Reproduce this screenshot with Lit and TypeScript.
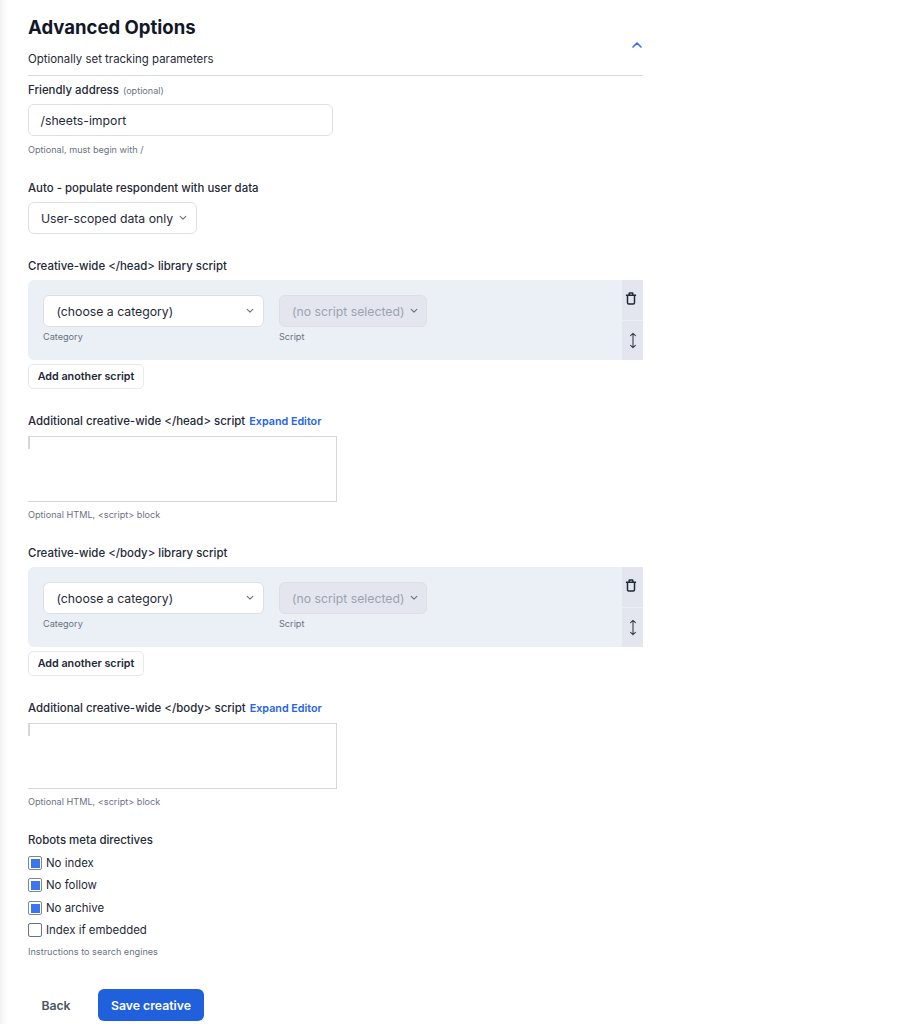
import { css, html, LitElement, svg } from "lit";
import { customElement } from "lit/decorators.js";

const chevron = svg`<path d="M1.5 1.5 5 5l3.5-3.5" fill="none" stroke="currentColor" stroke-width="1.4" stroke-linecap="round" stroke-linejoin="round"/>`;

@customElement("app-root")
export class AppRoot extends LitElement {
  static styles = css`
    :host {
      display: block;
      height: 1024px;
      overflow: hidden;
      box-sizing: border-box;
      padding-left: 28px;
      background: linear-gradient(90deg, #f1f1f2 0, #fbfbfb 5px, #fff 8px);
      font-family: Inter, "Liberation Sans", sans-serif;
      color: #1f2937;
    }
    .page {
      width: 615px;
      display: flex;
      flex-direction: column;
    }
    .head {
      position: relative;
      height: 76px;
      box-sizing: border-box;
      border-bottom: 1px solid #d9dadc;
    }
    h2 {
      margin: 0;
      padding-top: 16px;
      font-size: 18.55px;
      line-height: 23px;
      font-weight: 700;
      color: #111827;
    }
    .sub {
      margin-top: 12px;
      font-size: 11.43px;
      line-height: 16px;
      color: #1f2937;
    }
    .collapse {
      position: absolute;
      right: 0;
      top: 41px;
      width: 12px;
      height: 8px;
      color: #2f6fed;
    }
    .label {
      font-size: 11.43px;
      line-height: 16px;
      font-weight: 500;
      color: #1f2937;
    }
    .optional {
      font-size: 9.1px;
      font-weight: 400;
      color: #6b7280;
      margin-left: 1px;
    }
    .hint {
      font-size: 9.15px;
      line-height: 12px;
      color: #6b7280;
    }
    .friendly { margin-top: 6px; }
    .input {
      margin-top: 5px;
      width: 305px;
      height: 32px;
      box-sizing: border-box;
      display: flex;
      align-items: center;
      padding-left: 11.5px;
      background: #fff;
      border: 1px solid #dcdfe6;
      border-radius: 6px;
      font-size: 12.25px;
      color: #1f2937;
    }
    .friendly .hint { margin-top: 8px; }
    .auto { margin-top: 24px; }
    .select {
      box-sizing: border-box;
      height: 32px;
      display: inline-flex;
      align-items: center;
      justify-content: space-between;
      padding: 0 9px 0 12px;
      background: #fff;
      border: 1px solid #dcdfe6;
      border-radius: 6px;
      font-size: 12.25px;
      color: #1f2937;
    }
    .select svg {
      width: 8px;
      height: 6px;
      color: #6b7280;
    }
    .auto .select {
      display: flex;
      margin-top: 6px;
      width: 169px;
    }
    .library { margin-top: 24px; }
    .panel {
      margin-top: 6px;
      height: 80px;
      display: flex;
      background: #ebeff6;
      border-radius: 6px 0 0 6px;
    }
    .fields {
      flex: 1;
      display: flex;
      gap: 15px;
      padding: 15px 0 0 15px;
    }
    .field .hint { margin-top: 4px; }
    .category {
      width: 221px;
      padding-left: 12.5px;
    }
    .script {
      width: 148px;
      padding-right: 8px;
      background: #e3e6ee;
      color: #9ca3af;
    }
    .script svg { color: #6b7280; }
    .tools {
      width: 21px;
      display: flex;
      flex-direction: column;
      gap: 1px;
      background: #ebeff6;
    }
    .tool {
      flex: 1;
      display: flex;
      align-items: center;
      justify-content: center;
      background: #e3e6ee;
      color: #1f2937;
    }
    .trash {
      width: 12px;
      height: 13px;
      margin: 0 3px 3px 0;
    }
    .move { width: 8px; height: 17px; color: #374151; }
    .add {
      margin-top: 4px;
      align-self: flex-start;
      width: 116px;
      height: 25px;
      box-sizing: border-box;
      display: flex;
      align-items: center;
      justify-content: center;
      background: #fff;
      border: 1px solid #e6e8f0;
      border-radius: 5px;
      font-size: 10.75px;
      font-weight: 600;
      color: #1f2937;
    }
    .extra { margin-top: 24px; }
    .link {
      margin-left: 1px;
      font-size: 10.75px;
      font-weight: 600;
      color: #2563eb;
    }
    .textarea {
      margin-top: 6px;
      position: relative;
      width: 309px;
      height: 66px;
      box-sizing: border-box;
      background: #fff;
      border: 1px solid #d5d6d8;
      border-left: none;
    }
    .textarea::before {
      content: "";
      position: absolute;
      left: 0;
      top: 0;
      width: 2px;
      height: 12px;
      background: #d5d6d8;
    }
    .extra .hint { margin-top: 7px; }
    .robots { margin-top: 24px; }
    .checks {
      margin-top: 6px;
      display: flex;
      flex-direction: column;
      gap: 4.4px;
    }
    .check {
      display: flex;
      align-items: center;
      gap: 4px;
      height: 18px;
      font-size: 11.43px;
      color: #1f2937;
    }
    .box {
      width: 14px;
      height: 14px;
      box-sizing: border-box;
      border: 1px solid #6b7280;
      border-radius: 2px;
      background: #fff;
    }
    .box.on {
      padding: 1.5px;
      border-color: #7f8796;
      background: #3b76ee content-box;
    }
    .robots .hint { margin-top: 7px; }
    .actions {
      margin-top: 31px;
      display: flex;
      align-items: center;
      gap: 14px;
    }
    .back {
      width: 56px;
      text-align: center;
      font-size: 12.25px;
      font-weight: 600;
      color: #4b5563;
    }
    .save {
      width: 106px;
      height: 32px;
      display: flex;
      align-items: center;
      justify-content: center;
      background: #2160dc;
      border-radius: 6px;
      font-size: 12.25px;
      font-weight: 600;
      color: #fff;
    }
  `;

  private renderSelect(text: string, cls: string) {
    return html`<div class="select ${cls}">
      <span>${text}</span>
      <svg viewBox="0 0 10 7">${chevron}</svg>
    </div>`;
  }

  private renderScripts(tag: string) {
    return html`
      <div class="library">
        <div class="label">Creative-wide &lt;/${tag}&gt; library script</div>
        <div class="panel">
          <div class="fields">
            <div class="field">
              ${this.renderSelect("(choose a category)", "category")}
              <div class="hint">Category</div>
            </div>
            <div class="field">
              ${this.renderSelect("(no script selected)", "script")}
              <div class="hint">Script</div>
            </div>
          </div>
          <div class="tools">
            <div class="tool">
              <svg class="trash" viewBox="0 0 13 14" fill="none" stroke="currentColor" stroke-width="1.6" stroke-linejoin="round">
                <path d="M1 3.5h11M2.7 3.5v8.2c0 .8.5 1.3 1.3 1.3h5c.8 0 1.3-.5 1.3-1.3V3.5M4.5 3.5V1.6c0-.4.2-.6.6-.6h2.8c.4 0 .6.2.6.6v1.9"/>
              </svg>
            </div>
            <div class="tool">
              <svg class="move" viewBox="0 0 9 20" fill="none" stroke="currentColor" stroke-width="1.3" stroke-linecap="round" stroke-linejoin="round">
                <path d="M4.5 1.5v17M1.7 4.3 4.5 1.5l2.8 2.8M1.7 15.7l2.8 2.8 2.8-2.8"/>
              </svg>
            </div>
          </div>
        </div>
        <div class="add">Add another script</div>
      </div>
      <div class="extra">
        <div class="label">
          Additional creative-wide &lt;/${tag}&gt; script
          <span class="link">Expand Editor</span>
        </div>
        <div class="textarea"></div>
        <div class="hint">Optional HTML, &lt;script&gt; block</div>
      </div>
    `;
  }

  private renderCheck(text: string, on: boolean) {
    return html`<div class="check">
      <span class="box ${on ? "on" : ""}"></span>${text}
    </div>`;
  }

  render() {
    return html`
      <div class="page">
        <div class="head">
          <h2>Advanced Options</h2>
          <div class="sub">Optionally set tracking parameters</div>
          <svg class="collapse" viewBox="0 0 12 8" fill="none" stroke="currentColor" stroke-width="1.6" stroke-linecap="round" stroke-linejoin="round">
            <path d="M2 6l4-4 4 4"/>
          </svg>
        </div>
        <div class="friendly">
          <div class="label">Friendly address <span class="optional">(optional)</span></div>
          <div class="input">/sheets-import</div>
          <div class="hint">Optional, must begin with /</div>
        </div>
        <div class="auto">
          <div class="label">Auto - populate respondent with user data</div>
          ${this.renderSelect("User-scoped data only", "")}
        </div>
        ${this.renderScripts("head")}
        ${this.renderScripts("body")}
        <div class="robots">
          <div class="label">Robots meta directives</div>
          <div class="checks">
            ${this.renderCheck("No index", true)}
            ${this.renderCheck("No follow", true)}
            ${this.renderCheck("No archive", true)}
            ${this.renderCheck("Index if embedded", false)}
          </div>
          <div class="hint">Instructions to search engines</div>
        </div>
        <div class="actions">
          <div class="back">Back</div>
          <div class="save">Save creative</div>
        </div>
      </div>
    `;
  }
}
